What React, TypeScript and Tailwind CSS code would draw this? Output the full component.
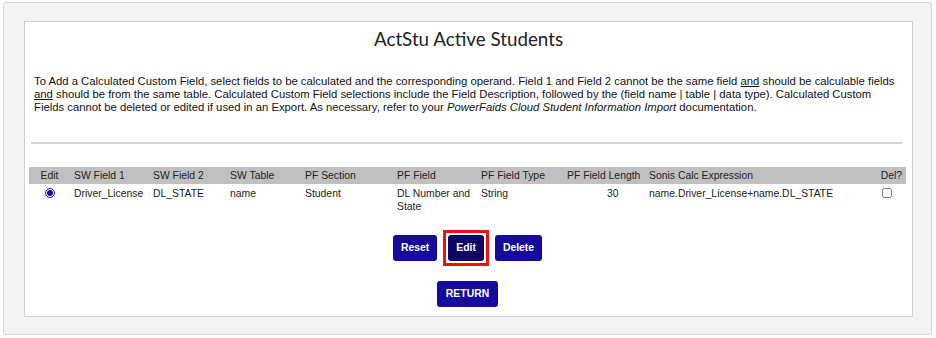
import React from 'react'

const columns = [
  { label: 'Edit', width: 41, align: 'text-center' },
  { label: 'SW Field 1', width: 79 },
  { label: 'SW Field 2', width: 77 },
  { label: 'SW Table', width: 75 },
  { label: 'PF Section', width: 92 },
  { label: 'PF Field', width: 84 },
  { label: 'PF Field Type', width: 86 },
  { label: 'PF Field Length', width: 82 },
  { label: 'Sonis Calc Expression', width: 228 },
  { label: 'Del?', width: 33, align: 'text-right pr-[4px]' },
]

export default function App() {
  return (
    <div className="w-[936px] h-[338px] bg-white pt-[2px] pl-[3px] font-['Liberation_Sans',Arial,sans-serif]">
      <div className="w-[929px] h-[333px] bg-[#f4f4f4] border border-[#d4d4d4] rounded-[3px] pt-[18px] pl-[20px]">
        <div className="w-[889px] h-[296px] bg-white border border-[#d0d0d0] flex flex-col">
          <h1 className="pt-[6px] text-center text-[18.8px] leading-[22px] text-[#222] font-['Lato','Open_Sans',sans-serif]">
            ActStu Active Students
          </h1>

          <p className="mt-[25px] pl-[9px] pr-[8px] text-[11.3px] leading-[13px] text-[#111]">
            To Add a Calculated Custom Field, select fields to be calculated and the corresponding operand. Field 1 and Field 2 cannot be the same field <u>and</u> should be calculable fields <u>and</u> should be from the same table. Calculated Custom Field selections include the Field Description, followed by the (field name | table | data type). Calculated Custom Fields cannot be deleted or edited if used in an Export. As necessary, refer to your <i>PowerFaids Cloud Student Information Import</i> documentation.
          </p>

          <div className="mt-[28px] ml-[6px] mr-[10px] h-[2px] bg-[#d4d4d4]" />

          <table className="mt-[23px] ml-[4px] w-[877px] table-fixed border-collapse text-[10.4px] text-[#222]">
            <colgroup>
              {columns.map(c => (
                <col key={c.label} style={{ width: c.width }} />
              ))}
            </colgroup>
            <thead>
              <tr className="bg-[#c0c0c0] h-[17px]">
                {columns.map(c => (
                  <th key={c.label} className={`font-normal leading-[13px] whitespace-nowrap ${c.align ?? 'text-left pl-[4px]'}`}>
                    {c.label}
                  </th>
                ))}
              </tr>
            </thead>
            <tbody>
              <tr className="align-top leading-[13px]">
                <td className="text-center pt-[4px]">
                  <input type="radio" defaultChecked className="w-[10px] h-[10px] m-0 ml-[1px] accent-[#1a0aa0] align-top" />
                </td>
                <td className="pl-[4px] pt-[3px]">Driver_License</td>
                <td className="pl-[4px] pt-[3px]">DL_STATE</td>
                <td className="pl-[4px] pt-[3px]">name</td>
                <td className="pl-[4px] pt-[3px]">Student</td>
                <td className="pl-[4px] pt-[3px]">DL Number and State</td>
                <td className="pl-[4px] pt-[3px]">String</td>
                <td className="pl-[44px] pt-[3px]">30</td>
                <td className="pl-[4px] pt-[3px]">name.Driver_License+name.DL_STATE</td>
                <td className="pl-[9px] pt-[4px]">
                  <input type="checkbox" className="w-[10px] h-[10px] m-0 align-top" />
                </td>
              </tr>
            </tbody>
          </table>

          <div className="mt-[17px] flex justify-center items-center gap-[6px] pr-[2px]">
            <button className="h-[26px] px-[8px] rounded-[3px] bg-[#150a9c] text-white text-[10.4px] font-bold">Reset</button>
            <span className="border-[3px] border-[#ee1111] p-[2px] flex">
              <button className="h-[26px] px-[8px] rounded-[3px] bg-[#0e0566] text-white text-[10.4px] font-bold">Edit</button>
            </span>
            <button className="h-[26px] px-[8px] rounded-[3px] bg-[#150a9c] text-white text-[10.4px] font-bold">Delete</button>
          </div>

          <div className="mt-[15px] flex justify-center pr-[2px]">
            <button className="h-[26px] px-[9px] rounded-[3px] bg-[#150a9c] text-white text-[10.4px] font-bold">RETURN</button>
          </div>
        </div>
      </div>
    </div>
  )
}
